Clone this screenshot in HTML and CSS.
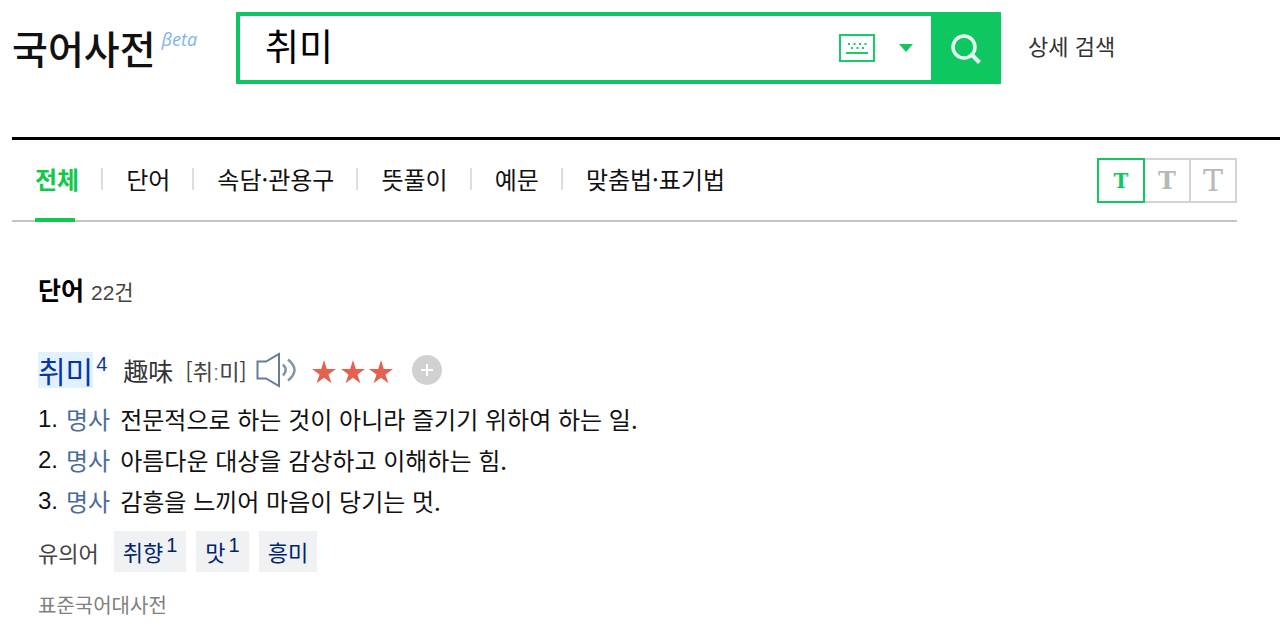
FILE: index.html
```html
<!DOCTYPE html>
<html lang="ko">
<head>
  <meta charset="UTF-8" />
  <meta name="viewport" content="width=device-width, initial-scale=1.0"/>
  <title>취미 - 국어사전</title>
  <link rel="stylesheet" href="styles.css">
</head>
<body>

  <!-- Logo and search -->
  <header class="header">
    <a href="#" class="logo">국어사전<span class="beta">βeta</span></a>
    <form class="search" role="search">
      <input type="text" class="search-input" name="query" value="취미" aria-label="검색어" />
      <button type="button" class="keyboard" aria-label="입력기">
        <svg width="36" height="28" viewBox="0 0 36 28">
          <rect x="1" y="1" width="34" height="26" fill="none" stroke="#19cc69" stroke-width="2"/>
          <path d="M9 10h2M14.500 10h2M20 10h2M25.500 10h2M12 14h2M17.500 14h2M23 14h2M7 19h22" stroke="#19cc69" stroke-width="2"/>
        </svg>
      </button>
      <button type="button" class="toggle" aria-label="자동완성">
        <svg width="14" height="8" viewBox="0 0 14 8"><path d="M0 0h14L7 8z" fill="#0fc95c"/></svg>
      </button>
      <button type="submit" class="search-button" aria-label="검색">
        <svg width="30" height="30" viewBox="0 0 30 30" fill="none" stroke="#e6fbef">
          <circle cx="13" cy="13" r="11" stroke-width="3.500"/>
          <path d="M20.500 20.500l8 8" stroke-width="4"/>
        </svg>
      </button>
    </form>
    <a href="#" class="detail">상세 검색</a>
  </header>

  <!-- Category tabs -->
  <div class="tabs">
    <nav>
      <ul class="tab-list">
        <li><a href="#" class="active">전체</a></li>
        <li><a href="#">단어</a></li>
        <li><a href="#">속담·관용구</a></li>
        <li><a href="#">뜻풀이</a></li>
        <li><a href="#">예문</a></li>
        <li><a href="#">맞춤법·표기법</a></li>
      </ul>
    </nav>
    <div class="font-size">
      <button type="button" class="small selected">T</button>
      <button type="button" class="medium">T</button>
      <button type="button" class="large">T</button>
    </div>
  </div>

  <!-- Results -->
  <main class="results">
    <h2>단어 <span class="count">22건</span></h2>

    <div class="word">
      <a href="#" class="headword"><mark>취미</mark><sup>4</sup></a>
      <span class="hanja">趣味</span>
      <span class="pron">[취ː미]</span>
      <button type="button" class="listen" aria-label="발음 듣기">
        <svg width="40" height="36" viewBox="0 0 40 36" fill="none" stroke="#667b9c" stroke-width="2">
          <path d="M1.500 9.500h8.500L23 2v32L10 26.500H1.500z"/>
          <path d="M27 12.500q5.500 5.500 0 11" stroke="#8293ae" stroke-width="2.500"/>
          <path d="M32 7.500q13 10.500 0 21" stroke="#8293ae" stroke-width="2.500"/>
        </svg>
      </button>
      <svg class="stars" width="82" height="24" viewBox="0 0 82 24" fill="#e4604f" role="img" aria-label="중요도 3">
        <path id="star" d="M12 0l2.800 9H24l-7.500 5.400 2.900 8.800L12 17.800l-7.400 5.400 2.900-8.800L0 9h9.200z"/>
        <use href="#star" x="29"/>
        <use href="#star" x="57"/>
      </svg>
      <button type="button" class="add" aria-label="단어장에 추가">
        <svg width="30" height="30" viewBox="0 0 30 30">
          <circle cx="15" cy="15" r="15" fill="#d1d1d1"/>
          <path d="M15 9v12M9 15h12" stroke="#fff" stroke-width="2"/>
        </svg>
      </button>
    </div>

    <ol class="meanings">
      <li><span class="num">1.</span><span class="pos">명사</span>전문적으로 하는 것이 아니라 즐기기 위하여 하는 일.</li>
      <li><span class="num">2.</span><span class="pos">명사</span>아름다운 대상을 감상하고 이해하는 힘.</li>
      <li><span class="num">3.</span><span class="pos">명사</span>감흥을 느끼어 마음이 당기는 멋.</li>
    </ol>

    <div class="synonyms">
      <span class="label">유의어</span>
      <a href="#">취향<sup>1</sup></a>
      <a href="#">맛<sup>1</sup></a>
      <a href="#">흥미</a>
    </div>

    <p class="source">표준국어대사전</p>
  </main>

</body>
</html>
```

FILE: styles.css
```css
* {
  box-sizing: border-box;
}
body {
  margin: 0;
  padding-left: 12px;
  font-family: "Noto Sans CJK KR", sans-serif;
  font-size: 24px;
  color: #111;
  background: #fff;
}
a {
  color: inherit;
  text-decoration: none;
}
button {
  padding: 0;
  border: none;
  background: none;
  cursor: pointer;
}
svg {
  display: block;
}
sup {
  font-family: "Liberation Sans", sans-serif;
  font-size: 20px;
  line-height: 20px;
}

/* header */
.header {
  display: flex;
  align-items: flex-start;
  padding-top: 12px;
  height: 136px;
}
.logo {
  display: flex;
  flex: 0 0 224px;
  gap: 6px;
  font-size: 39px;
  font-weight: 500;
  line-height: 70px;
}
.beta {
  font-family: "Open Sans", sans-serif;
  font-size: 18px;
  font-style: italic;
  font-weight: 400;
  line-height: 54px;
  color: #7fb4f0;
}
.search {
  display: flex;
  align-items: center;
  flex: 0 1 765px;
  height: 72px;
  border: 4px solid #0fc760;
  border-right: none;
}
.search-input {
  flex: 1;
  min-width: 0;
  height: 64px;
  padding: 0 0 6px 25px;
  border: none;
  outline: none;
  font-family: inherit;
  font-size: 37px;
  color: #000;
}
.keyboard {
  margin-right: 24px;
}
.toggle {
  margin-right: 18px;
}
.search-button {
  display: flex;
  align-items: center;
  justify-content: center;
  align-self: stretch;
  width: 70px;
  padding-top: 2px;
  background: #0fc760;
}
.detail {
  margin-left: 27px;
  font-size: 22px;
  line-height: 66px;
  color: #333;
}

/* tabs */
.tabs {
  display: flex;
  justify-content: space-between;
  align-items: flex-start;
  position: relative;
  margin-right: 43px;
  height: 86px;
  border-bottom: 2px solid #c4c4c4;
}
.tabs::before {
  content: "";
  position: absolute;
  top: 1px;
  left: 0;
  right: -43px;
  height: 3px;
  background: #000;
}
.tab-list {
  display: flex;
  margin: 0;
  padding: 0;
  list-style: none;
}
.tab-list li {
  display: flex;
  align-items: center;
  height: 86px;
  padding: 4px 0 0 23px;
}
.tab-list li + li::before {
  content: "";
  width: 2px;
  height: 22px;
  margin: 0 23px 4px 0;
  background: #ddd;
}
.tab-list li + li {
  padding-left: 22px;
}
.tab-list a {
  display: flex;
  flex-direction: column;
  height: 82px;
  line-height: 78px;
}
.tab-list .active {
  font-weight: 700;
  color: #0fc94a;
}
.tab-list .active::after {
  content: "";
  width: 40px;
  height: 4px;
  background: #0fc94a;
}
.font-size {
  display: flex;
  margin-top: 22px;
}
.font-size button {
  width: 46px;
  height: 45px;
  border: 2px solid #d4d4d4;
  border-left: none;
  font-family: "DejaVu Serif", serif;
  font-weight: 700;
  color: #b8b8b8;
}
.font-size .small {
  font-size: 20px;
}
.font-size .medium {
  font-size: 24px;
}
.font-size .large {
  font-size: 30px;
  font-weight: 400;
}
.font-size .selected {
  width: 48px;
  border: 2px solid #0fc760;
  color: #0fc760;
}

/* results */
.results {
  padding: 49px 43px 0 26px;
}
h2 {
  margin: 0;
  font-size: 25px;
  line-height: 36px;
  color: #000;
}
.count {
  font-family: "Liberation Sans", "Noto Sans CJK KR", sans-serif;
  font-size: 21px;
  font-weight: 400;
  color: #444;
}
.word {
  display: flex;
  align-items: center;
  height: 38px;
  margin-top: 40px;
}
.headword {
  display: flex;
  font-size: 30px;
  line-height: 36px;
  color: #0a33aa;
}
.headword mark {
  background: #e0f2ff;
  color: inherit;
}
.headword sup {
  padding: 2px 0 0 3px;
}
.hanja {
  margin-left: 16px;
  font-size: 25px;
  color: #333;
}
.pron {
  margin-left: 12px;
  font-size: 22px;
  color: #444;
}
.listen {
  margin-left: 9px;
}
.stars {
  margin: 4px 0 0 16px;
}
.add {
  margin-left: 18px;
}
.meanings {
  margin: 9px 0 0;
  padding: 0;
  list-style: none;
}
.meanings li {
  display: flex;
  line-height: 41px;
}
.num {
  flex: 0 0 28px;
  font-family: "Liberation Sans", sans-serif;
}
.pos {
  flex: none;
  margin-right: 10px;
  color: #4a6d9c;
}
.synonyms {
  display: flex;
  align-items: center;
  gap: 10px;
  margin-top: 10px;
  font-size: 22px;
}
.label {
  margin-right: 5px;
  color: #444;
}
.synonyms a {
  display: flex;
  padding: 0 9px;
  line-height: 41px;
  background: #eff1f3;
  color: #00246b;
}
.synonyms sup {
  padding: 4px 0 0 3px;
}
.source {
  margin: 18px 0 0;
  font-size: 20px;
  line-height: 30px;
  color: #808080;
}
```
